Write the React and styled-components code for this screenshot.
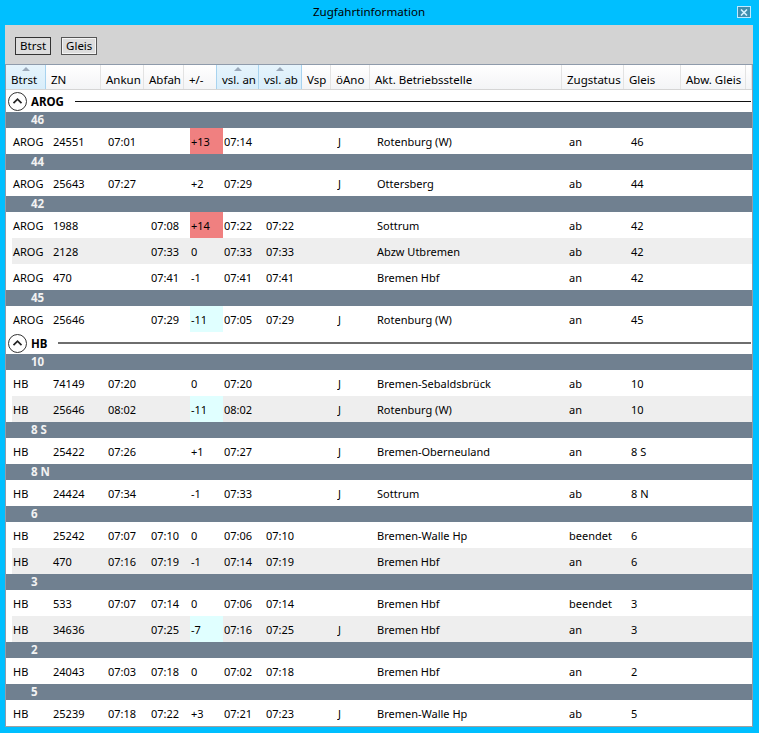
import React from 'react';
import styled, { createGlobalStyle } from 'styled-components';

const GlobalStyle = createGlobalStyle`
  html, body {
    margin: 0;
    padding: 0;
    background: #00bfff;
    font-family: "Noto Sans", "Liberation Sans", sans-serif;
    font-size: 11px;
    color: #000;
  }
  * { box-sizing: border-box; }
`;

const COLS = '40px 55px 43px 40px 33px 42px 43px 29px 39px 192px 62px 57px 65px';

const Window = styled.div`
  width: 759px;
  height: 733px;
  display: flex;
  flex-direction: column;
  background: #00bfff;
  padding: 0 6px 6px 5px;
  overflow: hidden;
`;

const TitleBar = styled.div`
  height: 25px;
  flex: none;
  display: flex;
  align-items: center;
  justify-content: center;
  padding-right: 20px;
  position: relative;
`;

const Title = styled.span`
  font-size: 11.6px;
  line-height: 16px;
  margin-top: -1px;
`;

const CloseButton = styled.div`
  position: absolute;
  right: 2px;
  top: 6px;
  width: 14px;
  height: 12px;
  border: 1px solid #bfeaff;
  background: #3f8fae;
  display: flex;
  align-items: center;
  justify-content: center;
`;

const Body = styled.div`
  flex: 1;
  min-height: 0;
  display: flex;
  flex-direction: column;
  background: #fff;
`;

const Toolbar = styled.div`
  height: 39px;
  flex: none;
  background: #d3d3d3;
  display: flex;
  align-items: center;
  gap: 10px;
  padding: 0 0 0 10px;
`;

const ToolButton = styled.button`
  height: 18px;
  padding: 0 4px;
  font-family: inherit;
  font-size: 11.5px;
  line-height: 14px;
  color: #000;
  background: #dddddd;
  border: 1px solid ${({ $focused }) => ($focused ? '#555' : '#333')};
  box-shadow: ${({ $focused }) => ($focused ? 'inset 0 0 0 1px #f4f4f4' : 'none')};
  border-radius: 0;
  margin-top: 2px;
`;

const Grid = styled.div`
  flex: 1;
  min-height: 0;
  border: 1px solid #8f9bab;
  border-bottom-color: #a0a0a0;
  overflow: hidden;
  background: #fff;
`;

const HeaderRow = styled.div`
  display: grid;
  grid-template-columns: ${COLS} 1fr;
  height: 25px;
  border-bottom: 1px solid #d5d5d5;
  background: linear-gradient(#ffffff, #f3f4f6);
`;

const HeaderCell = styled.div`
  position: relative;
  display: flex;
  align-items: center;
  padding: 4px 0 0 5px;
  font-size: 11.5px;
  white-space: nowrap;
  overflow: hidden;
  border-right: 1px solid ${({ $sorted }) => ($sorted ? '#a8d3ef' : '#e3e3e3')};
  border-left: ${({ $sorted }) => ($sorted ? '1px solid #a8d3ef' : 'none')};
  margin-left: ${({ $sorted }) => ($sorted ? '-1px' : '0')};
  background: ${({ $sorted }) => ($sorted ? 'linear-gradient(#e6f4fc, #d8edfa)' : 'transparent')};
`;

const SortArrow = styled.span`
  position: absolute;
  top: 2px;
  left: 50%;
  margin-left: -4px;
  width: 0;
  height: 0;
  border-left: 4px solid transparent;
  border-right: 4px solid transparent;
  border-bottom: 4px solid #9aa9ba;
`;

const GroupHeader = styled.div`
  height: 22px;
  display: flex;
  align-items: center;
  padding-left: 2px;
`;

const Expander = styled.span`
  width: 19px;
  height: 19px;
  flex: none;
  border: 1px solid #333;
  border-radius: 50%;
  display: flex;
  align-items: center;
  justify-content: center;
  background: #fff;
`;

const GroupTitle = styled.span`
  font-weight: bold;
  font-size: 11.5px;
  margin: 0 11px 0 4px;
`;

const GroupLine = styled.span`
  flex: 1;
  margin-right: 1px;
  height: ${({ $heavy }) => ($heavy ? '2px' : '1px')};
  background: ${({ $heavy }) => ($heavy ? '#6e6e6e' : '#111')};
`;

const SubBar = styled.div`
  height: 16px;
  background: #708090;
  color: #f2f2f2;
  font-weight: bold;
  font-size: 11.5px;
  line-height: 16px;
  padding-left: 25px;
`;

const Row = styled.div`
  padding-left: 6px;
`;

const RowInner = styled.div`
  display: grid;
  grid-template-columns: ${COLS};
  height: 26px;
  background: ${({ $alt }) => ($alt ? '#eeeeee' : '#ffffff')};
`;

const Cell = styled.div`
  display: flex;
  align-items: center;
  padding-left: 1px;
  white-space: nowrap;
  overflow: hidden;
  background: ${({ $tone }) =>
    $tone === 'late' ? '#f08080' : $tone === 'early' ? '#e0ffff' : 'transparent'};
`;

const headers = [
  { t: 'Btrst', s: true },
  { t: 'ZN' },
  { t: 'Ankun' },
  { t: 'Abfah' },
  { t: '+/-' },
  { t: 'vsl. an', s: true },
  { t: 'vsl. ab', s: true },
  { t: 'Vsp' },
  { t: 'öAno' },
  { t: 'Akt. Betriebsstelle' },
  { t: 'Zugstatus' },
  { t: 'Gleis' },
  { t: 'Abw. Gleis' },
];

// [btrst, zn, an, ab, diff, vslAn, vslAb, vsp, oeAno, stelle, status, gleis, tone]
const groups = [
  {
    name: 'AROG',
    heavy: false,
    tracks: [
      { g: '46', rows: [['AROG', '24551', '07:01', '', '+13', '07:14', '', '', 'J', 'Rotenburg (W)', 'an', '46', 'late']] },
      { g: '44', rows: [['AROG', '25643', '07:27', '', '+2', '07:29', '', '', 'J', 'Ottersberg', 'ab', '44']] },
      {
        g: '42',
        rows: [
          ['AROG', '1988', '', '07:08', '+14', '07:22', '07:22', '', '', 'Sottrum', 'ab', '42', 'late'],
          ['AROG', '2128', '', '07:33', '0', '07:33', '07:33', '', '', 'Abzw Utbremen', 'ab', '42'],
          ['AROG', '470', '', '07:41', '-1', '07:41', '07:41', '', '', 'Bremen Hbf', 'an', '42'],
        ],
      },
      { g: '45', rows: [['AROG', '25646', '', '07:29', '-11', '07:05', '07:29', '', 'J', 'Rotenburg (W)', 'an', '45', 'early']] },
    ],
  },
  {
    name: 'HB',
    heavy: true,
    tracks: [
      {
        g: '10',
        rows: [
          ['HB', '74149', '07:20', '', '0', '07:20', '', '', 'J', 'Bremen-Sebaldsbrück', 'ab', '10'],
          ['HB', '25646', '08:02', '', '-11', '08:02', '', '', 'J', 'Rotenburg (W)', 'an', '10', 'early'],
        ],
      },
      { g: '8 S', rows: [['HB', '25422', '07:26', '', '+1', '07:27', '', '', 'J', 'Bremen-Oberneuland', 'an', '8 S']] },
      { g: '8 N', rows: [['HB', '24424', '07:34', '', '-1', '07:33', '', '', 'J', 'Sottrum', 'ab', '8 N']] },
      {
        g: '6',
        rows: [
          ['HB', '25242', '07:07', '07:10', '0', '07:06', '07:10', '', '', 'Bremen-Walle Hp', 'beendet', '6'],
          ['HB', '470', '07:16', '07:19', '-1', '07:14', '07:19', '', '', 'Bremen Hbf', 'an', '6'],
        ],
      },
      {
        g: '3',
        rows: [
          ['HB', '533', '07:07', '07:14', '0', '07:06', '07:14', '', '', 'Bremen Hbf', 'beendet', '3'],
          ['HB', '34636', '', '07:25', '-7', '07:16', '07:25', '', 'J', 'Bremen Hbf', 'an', '3', 'early'],
        ],
      },
      { g: '2', rows: [['HB', '24043', '07:03', '07:18', '0', '07:02', '07:18', '', '', 'Bremen Hbf', 'an', '2']] },
      { g: '5', rows: [['HB', '25239', '07:18', '07:22', '+3', '07:21', '07:23', '', 'J', 'Bremen-Walle Hp', 'ab', '5']] },
    ],
  },
];

const ChevronUp = () => (
  <svg width="11" height="8" viewBox="0 0 11 8">
    <path d="M1.5 6.2 L5.5 2.2 L9.5 6.2" fill="none" stroke="#222" strokeWidth="1.7" />
  </svg>
);

const CloseGlyph = () => (
  <svg width="8" height="7" viewBox="0 0 8 7">
    <path d="M1 0.5 L7 6.5 M7 0.5 L1 6.5" stroke="#d4f2ff" strokeWidth="1.6" />
  </svg>
);

const DataRow = ({ row, alt }) => {
  const tone = row[12];
  return (
    <Row>
      <RowInner $alt={alt}>
        {row.slice(0, 12).map((v, i) => (
          <Cell key={i} $tone={i === 4 ? tone : undefined}>{v}</Cell>
        ))}
        <Cell />
      </RowInner>
    </Row>
  );
};

export default function App() {
  return (
    <>
      <GlobalStyle />
      <Window>
        <TitleBar>
          <Title>Zugfahrtinformation</Title>
          <CloseButton><CloseGlyph /></CloseButton>
        </TitleBar>
        <Body>
          <Toolbar>
            <ToolButton>Btrst</ToolButton>
            <ToolButton $focused>Gleis</ToolButton>
          </Toolbar>
          <Grid>
            <HeaderRow>
              {headers.map((h) => (
                <HeaderCell key={h.t} $sorted={h.s}>
                  {h.s && <SortArrow />}
                  {h.t}
                </HeaderCell>
              ))}
              <HeaderCell />
            </HeaderRow>
            {groups.map((grp) => (
              <div key={grp.name}>
                <GroupHeader>
                  <Expander><ChevronUp /></Expander>
                  <GroupTitle>{grp.name}</GroupTitle>
                  <GroupLine $heavy={grp.heavy} />
                </GroupHeader>
                {grp.tracks.map((tr) => (
                  <div key={tr.g}>
                    <SubBar>{tr.g}</SubBar>
                    {tr.rows.map((r, i) => (
                      <DataRow key={r[1] + i} row={r} alt={i % 2 === 1} />
                    ))}
                  </div>
                ))}
              </div>
            ))}
          </Grid>
        </Body>
      </Window>
    </>
  );
}
